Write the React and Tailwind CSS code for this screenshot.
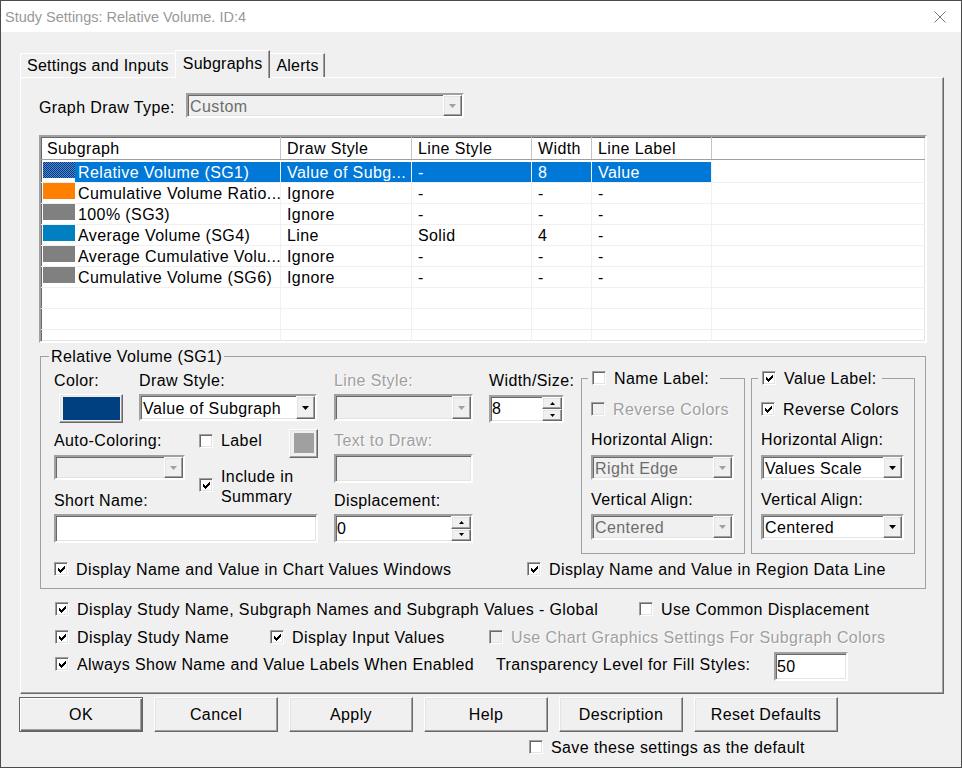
import React from "react";

const sunken =
  "border-2 border-t-[#a0a0a0] border-l-[#a0a0a0] border-b-white border-r-white shadow-[inset_1px_1px_0_#696969,inset_-1px_-1px_0_#e3e3e3]";
const raised =
  "border border-t-white border-l-white border-b-[#696969] border-r-[#696969] shadow-[inset_-1px_-1px_0_#a0a0a0,inset_1px_1px_0_#e3e3e3]";
const dis = "text-[#a0a0a0] [text-shadow:1px_1px_0_#ffffff]";
const L = "h-[18px] pt-[1px] whitespace-nowrap";

function Tick({ color = "#000" }) {
  return (
    <svg width="7" height="7" viewBox="0 0 7 7" shapeRendering="crispEdges">
      {[2, 3, 4, 3, 2, 1, 0].map((y, x) => (
        <rect key={x} x={x} y={y} width="1" height="3" fill={color} />
      ))}
    </svg>
  );
}

function Box({ checked, disabled }) {
  return (
    <span
      className={`flex w-[14px] h-[14px] shrink-0 items-center justify-center border border-t-[#a0a0a0] border-l-[#a0a0a0] border-b-white border-r-white shadow-[inset_1px_1px_0_#696969,inset_-1px_-1px_0_#e3e3e3] ${
        disabled ? "bg-[#f0f0f0]" : "bg-white"
      }`}
    >
      {checked && <Tick color={disabled ? "#a0a0a0" : "#000"} />}
    </span>
  );
}

function CB({ checked, disabled, children, className = "" }) {
  return (
    <div className={`flex items-center leading-[18px] ${className}`}>
      <Box checked={checked} disabled={disabled} />
      <span className={`ml-[8px] ${L} ${disabled ? dis : ""}`}>{children}</span>
    </div>
  );
}

function Down({ color = "#000" }) {
  return (
    <svg width="7" height="4" viewBox="0 0 7 4">
      <path d="M0 0H7L3.5 4Z" fill={color} />
    </svg>
  );
}

function Combo({ value, disabled, className = "" }) {
  return (
    <div
      className={`flex items-stretch ${sunken} ${
        disabled ? "bg-[#f0f0f0] text-[#6d6d6d]" : "bg-white"
      } ${className}`}
    >
      <span className="flex-1 flex items-center pl-[2px] pt-[2px] leading-[18px] whitespace-nowrap overflow-hidden">
        {value}
      </span>
      <span className={`flex w-[19px] items-center justify-center bg-[#f0f0f0] ${raised}`}>
        <Down color={disabled ? "#a0a0a0" : "#000"} />
      </span>
    </div>
  );
}

function Edit({ value = "", disabled, className = "" }) {
  return (
    <div
      className={`flex items-center pl-[1px] leading-[18px] ${sunken} ${
        disabled ? "bg-[#f0f0f0]" : "bg-white"
      } ${className}`}
    >
      {value}
    </div>
  );
}

function Spin({ value, className = "" }) {
  return (
    <div className={`flex items-stretch bg-white ${sunken} ${className}`}>
      <span className="flex-1 flex items-center pl-[1px] leading-[18px]">{value}</span>
      <span className="flex flex-col w-[20px]">
        <span className={`flex-1 flex items-center justify-center bg-[#f0f0f0] ${raised}`}>
          <svg width="5" height="3" viewBox="0 0 5 3">
            <path d="M0 3H5L2.5 0Z" fill="#000" />
          </svg>
        </span>
        <span className={`flex-1 flex items-center justify-center bg-[#f0f0f0] ${raised}`}>
          <svg width="5" height="3" viewBox="0 0 5 3">
            <path d="M0 0H5L2.5 3Z" fill="#000" />
          </svg>
        </span>
      </span>
    </div>
  );
}

function Btn({ children, def, w = "w-[124px]" }) {
  return (
    <div
      className={`${w} h-[35px] flex items-center justify-center leading-[18px] ${
        def
          ? "border border-[#646464] shadow-[inset_1px_1px_0_#ffffff,inset_-1px_-1px_0_#696969,inset_-2px_-2px_0_#a0a0a0]"
          : raised
      }`}
    >
      {children}
    </div>
  );
}

const rows = [
  { sw: "dither", name: "Relative Volume (SG1)", ds: "Value of Subg...", ls: "-", w: "8", ll: "Value", sel: true },
  { sw: "bg-[#ff8000]", name: "Cumulative Volume Ratio...", ds: "Ignore", ls: "-", w: "-", ll: "-" },
  { sw: "bg-[#808080]", name: "100% (SG3)", ds: "Ignore", ls: "-", w: "-", ll: "-" },
  { sw: "bg-[#0080c0]", name: "Average Volume (SG4)", ds: "Line", ls: "Solid", w: "4", ll: "-" },
  { sw: "bg-[#808080]", name: "Average Cumulative Volu...", ds: "Ignore", ls: "-", w: "-", ll: "-" },
  { sw: "bg-[#808080]", name: "Cumulative Volume (SG6)", ds: "Ignore", ls: "-", w: "-", ll: "-" },
  {},
  {},
  {},
];

function ListView() {
  const hc = "flex items-center pl-[6px] pt-[2px] border-r border-[#c4c4c4] whitespace-nowrap";
  return (
    <div className={`ml-[18px] mt-[17px] w-[888px] h-[208px] bg-white overflow-hidden ${sunken}`}>
      <div className="flex h-[23px] border-b border-[#a0a0a0] leading-[18px]">
        <div className={`w-[240px] ${hc}`}>Subgraph</div>
        <div className={`w-[131px] ${hc}`}>Draw Style</div>
        <div className={`w-[120px] ${hc}`}>Line Style</div>
        <div className={`w-[60px] ${hc}`}>Width</div>
        <div className={`w-[120px] ${hc}`}>Line Label</div>
        <div className="flex-1" />
      </div>
      <div className="h-[2px]" />
      {rows.map((r, i) => {
        const hl = r.sel ? "bg-[#0078d7] text-white" : "";
        const c = `pl-[6px] pt-[2px] border-r border-[#f0f0f0] whitespace-nowrap overflow-hidden ${hl}`;
        return (
          <div key={i} className="flex h-[21px] border-b border-[#f0f0f0] leading-[18px]">
            <div className="w-[240px] flex border-r border-[#f0f0f0]">
              <span
                className={`w-[32px] h-[16px] ml-[2px] shrink-0 ${
                  r.sw === "dither"
                    ? "[background-image:repeating-conic-gradient(#0b3a7a_0%_25%,#4a86d4_0%_50%)] [background-size:2px_2px]"
                    : r.sw || ""
                }`}
              />
              <span className={`flex-1 pl-[3px] pt-[2px] whitespace-nowrap overflow-hidden ${hl}`}>
                {r.name}
              </span>
            </div>
            <div className={`w-[131px] ${c}`}>{r.ds}</div>
            <div className={`w-[120px] ${c}`}>{r.ls}</div>
            <div className={`w-[60px] ${c}`}>{r.w}</div>
            <div className={`w-[120px] ${c}`}>{r.ll}</div>
            <div className="flex-1" />
          </div>
        );
      })}
    </div>
  );
}

function LabelBox({ checked, title, pr, children }) {
  return (
    <fieldset className="w-[164px] border border-[#a0a0a0] shrink-0">
      <legend className={`ml-[6px] pl-[4px] ${pr} leading-[18px]`}>
        <span className="flex items-center">
          <Box checked={checked} />
          <span className={`ml-[8px] ${L}`}>{title}</span>
        </span>
      </legend>
      <div className="flex flex-col pl-[9px] pt-[13px] pb-[13px] leading-[18px]">{children}</div>
    </fieldset>
  );
}

export default function App() {
  return (
    <div className="w-[962px] h-[768px] bg-[#f0f0f0] border border-[#4b4b4b] text-[16px] tracking-[0.4px] text-black font-['Liberation_Sans',Arial,sans-serif] overflow-hidden flex flex-col">
      {/* Title bar */}
      <div className="h-[31px] shrink-0 bg-white flex items-center justify-between pl-[4px] pr-[15px]">
        <span className="text-[14.5px] leading-[16px] tracking-normal text-[#999999]">
          Study Settings: Relative Volume. ID:4
        </span>
        <svg width="12" height="12" viewBox="0 0 12 12">
          <path d="M0.5 0.5L11.5 11.5M11.5 0.5L0.5 11.5" stroke="#7a7a7a" strokeWidth="1" />
        </svg>
      </div>

      {/* Tabs */}
      <div className="pl-[19px] pt-[18px] flex items-end shrink-0 leading-[18px] tracking-[0.25px]">
        <div className="h-[24px] pl-[6px] pr-[8px] pt-[3px] border-t border-l border-t-white border-l-white whitespace-nowrap">
          Settings and Inputs
        </div>
        <div className="relative z-10 -mx-[2px] -mb-px h-[28px] pl-[7px] pr-[7px] pt-[4px] bg-[#f0f0f0] border-t border-l border-r border-t-white border-l-white border-r-[#696969] shadow-[inset_-1px_0_0_#a0a0a0] whitespace-nowrap">
          Subgraphs
        </div>
        <div className="h-[24px] pl-[7px] pr-[5px] pt-[3px] border-t border-l border-r border-t-white border-l-white border-r-[#696969] shadow-[inset_-1px_0_0_#a0a0a0] whitespace-nowrap">
          Alerts
        </div>
      </div>

      {/* Tab panel */}
      <div className="ml-[19px] w-[924px] h-[617px] shrink-0 flex flex-col border border-t-white border-l-white border-b-[#696969] border-r-[#696969] shadow-[inset_-1px_-1px_0_#a0a0a0] leading-[18px]">
        <div className="mt-[15px] ml-[18px] flex items-start">
          <span className="w-[147px] mt-[6px] whitespace-nowrap">Graph Draw Type:</span>
          <Combo value="Custom" disabled className="w-[278px] h-[25px]" />
        </div>

        <ListView />

        <fieldset className="ml-[19px] mt-[4px] w-[886px] border border-[#a0a0a0] pb-[10px]">
          <legend className={`ml-[8px] px-[2px] leading-[18px] ${L}`}>Relative Volume (SG1)</legend>
          <div className="flex items-start pt-[4px]">
            <div className="ml-[13px] mt-[2px] flex items-start">
              {/* col 1 */}
              <div className="w-[85px] shrink-0 flex flex-col">
                <span className={L}>Color:</span>
                <div className={`mt-[5px] ml-[5px] w-[64px] h-[29px] flex bg-[#f0f0f0] pl-[3px] pr-[2px] py-[2px] ${raised}`}>
                  <span className="flex-1 bg-[#003f80]" />
                </div>
                <span className={`mt-[8px] ${L}`}>Auto-Coloring:</span>
                <Combo disabled value="" className="mt-[6px] w-[131px] h-[25px]" />
                <span className={`mt-[11px] ${L}`}>Short Name:</span>
                <Edit className="mt-[5px] w-[264px] h-[29px]" />
              </div>
              {/* col 2 */}
              <div className="w-[195px] shrink-0 flex flex-col">
                <span className={L}>Draw Style:</span>
                <Combo value="Value of Subgraph" className="mt-[5px] w-[178px] h-[27px]" />
                <div className="mt-[8px] w-[179px] h-[29px] flex items-start">
                  <span className="ml-[60px] mt-[5px]">
                    <Box />
                  </span>
                  <span className="ml-[8px] mt-[3px]">Label</span>
                  <div className={`ml-auto w-[29px] h-[29px] flex bg-[#f0f0f0] pl-[4px] pr-[3px] pt-[3px] pb-[4px] ${raised}`}>
                    <span className="flex-1 bg-[#a0a0a0]" />
                  </div>
                </div>
                <div className="mt-[8px] ml-[60px] flex items-start">
                  <span className="mt-[12px]">
                    <Box checked />
                  </span>
                  <span className="ml-[8px] pt-[1px] h-[40px] leading-[20px] whitespace-nowrap">
                    Include in
                    <br />
                    Summary
                  </span>
                </div>
              </div>
              {/* col 3 */}
              <div className="w-[155px] shrink-0 flex flex-col">
                <span className={`${L} ${dis}`}>Line Style:</span>
                <Combo disabled value="" className="mt-[5px] w-[139px] h-[27px]" />
                <span className={`mt-[10px] ${L} ${dis}`}>Text to Draw:</span>
                <Edit disabled className="mt-[5px] w-[139px] h-[29px]" />
                <span className={`mt-[8px] ${L}`}>Displacement:</span>
                <Spin value="0" className="mt-[5px] w-[139px] h-[29px]" />
              </div>
              {/* col 4 */}
              <div className="w-[75px] shrink-0 flex flex-col">
                <span className={L}>Width/Size:</span>
                <Spin value="8" className="mt-[6px] w-[75px] h-[28px]" />
              </div>
            </div>

            <div className="ml-[17px]">
              <LabelBox title="Name Label:" pr="pr-[11px]">
                <CB disabled>Reverse Colors</CB>
                <span className={`mt-[12px] ${L}`}>Horizontal Align:</span>
                <Combo disabled value="Right Edge" className="mt-[7px] w-[143px] h-[25px]" />
                <span className={`mt-[10px] ${L}`}>Vertical Align:</span>
                <Combo disabled value="Centered" className="mt-[6px] w-[143px] h-[26px]" />
              </LabelBox>
            </div>
            <div className="ml-[6px]">
              <LabelBox checked title="Value Label:" pr="pr-[5px]">
                <CB checked>Reverse Colors</CB>
                <span className={`mt-[12px] ${L}`}>Horizontal Align:</span>
                <Combo value="Values Scale" className="mt-[7px] w-[143px] h-[25px]" />
                <span className={`mt-[10px] ${L}`}>Vertical Align:</span>
                <Combo value="Centered" className="mt-[6px] w-[143px] h-[26px]" />
              </LabelBox>
            </div>
          </div>
          <div className="mt-[6px] ml-[13px] flex">
            <div className="w-[473px] shrink-0">
              <CB checked>Display Name and Value in Chart Values Windows</CB>
            </div>
            <CB checked>Display Name and Value in Region Data Line</CB>
          </div>
        </fieldset>

        <div className="mt-[11px] ml-[34px] flex">
          <div className="w-[584px] shrink-0">
            <CB checked>Display Study Name, Subgraph Names and Subgraph Values - Global</CB>
          </div>
          <CB>Use Common Displacement</CB>
        </div>
        <div className="mt-[10px] ml-[34px] flex">
          <div className="w-[215px] shrink-0">
            <CB checked>Display Study Name</CB>
          </div>
          <div className="w-[219px] shrink-0">
            <CB checked>Display Input Values</CB>
          </div>
          <CB disabled>Use Chart Graphics Settings For Subgraph Colors</CB>
        </div>
        <div className="mt-[6px] ml-[34px] flex items-start">
          <div className="w-[441px] shrink-0 mt-[3px]">
            <CB checked>Always Show Name and Value Labels When Enabled</CB>
          </div>
          <span className={`w-[278px] shrink-0 mt-[3px] ${L}`}>Transparency Level for Fill Styles:</span>
          <Edit value="50" className="w-[74px] h-[29px]" />
        </div>
      </div>

      {/* Buttons */}
      <div className="mt-[3px] ml-[18px] flex gap-[11px] shrink-0">
        <Btn def>OK</Btn>
        <Btn>Cancel</Btn>
        <Btn>Apply</Btn>
        <Btn>Help</Btn>
        <Btn>Description</Btn>
        <Btn w="w-[144px]">Reset Defaults</Btn>
      </div>
      <div className="mt-[6px] ml-[528px] shrink-0">
        <CB>Save these settings as the default</CB>
      </div>
    </div>
  );
}
